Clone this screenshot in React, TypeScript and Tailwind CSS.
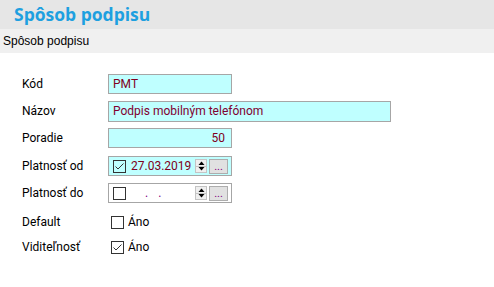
import React from "react";

const font = { fontFamily: "Roboto, 'Liberation Sans', sans-serif" };

function Check({ checked, bg = "bg-white" }: { checked: boolean; bg?: string }) {
  return (
    <div className={`w-[13px] h-[13px] border border-[#333333] ${bg} flex items-center justify-center shrink-0`}>
      {checked && (
        <svg width="11" height="11" viewBox="0 0 11 11">
          <polyline points="1.5,5.5 4,8 9.5,2.5" fill="none" stroke="#333333" strokeWidth="1" />
        </svg>
      )}
    </div>
  );
}

function Spin() {
  return (
    <div className="flex flex-col w-[12px] h-[14px] border border-[#c4c4c4] bg-[#efefef]">
      <div className="flex-1 flex items-center justify-center border-b border-[#c4c4c4]">
        <svg width="7" height="4" viewBox="0 0 7 4"><polygon points="0.5,4 6.5,4 3.5,0.5" fill="#000" /></svg>
      </div>
      <div className="flex-1 flex items-center justify-center">
        <svg width="7" height="4" viewBox="0 0 7 4"><polygon points="0.5,0 6.5,0 3.5,3.5" fill="#000" /></svg>
      </div>
    </div>
  );
}

function Dots() {
  return (
    <div className="w-[19px] h-[15px] ml-[2px] border border-[#adadad] bg-[#e1e1e1] flex items-end justify-center text-[11px] leading-[12px] text-[#800080]">
      ...
    </div>
  );
}

function Row({ label, children, mt }: { label: string; children: React.ReactNode; mt: string }) {
  return (
    <div className={`flex items-center h-[20px] ${mt}`}>
      <div className="w-[108px] shrink-0 pl-[22px] text-[12px] text-black">{label}</div>
      {children}
    </div>
  );
}

export default function App() {
  return (
    <div className="w-[494px] h-[287px] bg-white overflow-hidden" style={font}>
      <div className="h-[29px] bg-[#e6e6e6] flex items-center pl-[14px]">
        <span className="text-[17.5px] font-bold text-[#1ea0e0] leading-none" style={{ fontFamily: "'Open Sans', 'Noto Sans', sans-serif" }}>
          Spôsob podpisu
        </span>
      </div>
      <div className="h-[24px] bg-[#f0f0f0] flex items-center pl-[3px] text-[12px] text-black" style={{ fontFamily: "'Liberation Sans', sans-serif" }}>
        Spôsob podpisu
      </div>
      <div className="pt-[21px] flex flex-col">
        <Row label="Kód" mt="">
          <div className="w-[124px] h-[20px] border border-[#a6a6a6] bg-[#bfffff] flex items-center pl-[4px] text-[12px] text-[#800020]">
            PMT
          </div>
        </Row>
        <Row label="Názov" mt="mt-[7px]">
          <div className="w-[283px] h-[21px] border border-[#a6a6a6] bg-[#bfffff] flex items-center pl-[4px] text-[12px] text-[#800030]">
            Podpis mobilným telefónom
          </div>
        </Row>
        <Row label="Poradie" mt="mt-[7px]">
          <div className="w-[124px] h-[20px] border border-[#a6a6a6] bg-[#bfffff] flex items-center justify-end pr-[6px] text-[12px] text-[#800020]">
            50
          </div>
        </Row>
        <Row label="Platnosť od" mt="mt-[8px]">
          <div className="w-[124px] h-[20px] border border-[#a6a6a6] bg-[#bfffff] flex items-center pl-[4px] pr-[3px]">
            <Check checked bg="bg-[#bfffff]" />
            <span className="ml-[5px] text-[12px] text-[#800020]">27.03.2019</span>
            <div className="flex-1" />
            <Spin />
            <Dots />
          </div>
        </Row>
        <Row label="Platnosť do" mt="mt-[7px]">
          <div className="w-[124px] h-[20px] border border-[#a6a6a6] bg-white flex items-center pl-[4px] pr-[3px]">
            <Check checked={false} />
            <span className="ml-[19px] text-[12px] text-[#800080]">.</span>
            <span className="ml-[10px] text-[12px] text-[#800080]">.</span>
            <div className="flex-1" />
            <Spin />
            <Dots />
          </div>
        </Row>
        <Row label="Default" mt="mt-[9px]">
          <div className="flex items-center ml-[3px]">
            <Check checked={false} />
            <span className="ml-[4px] text-[12px] text-black">Áno</span>
          </div>
        </Row>
        <Row label="Viditeľnosť" mt="mt-[5px]">
          <div className="flex items-center ml-[3px]">
            <Check checked />
            <span className="ml-[4px] text-[12px] text-black">Áno</span>
          </div>
        </Row>
      </div>
    </div>
  );
}
